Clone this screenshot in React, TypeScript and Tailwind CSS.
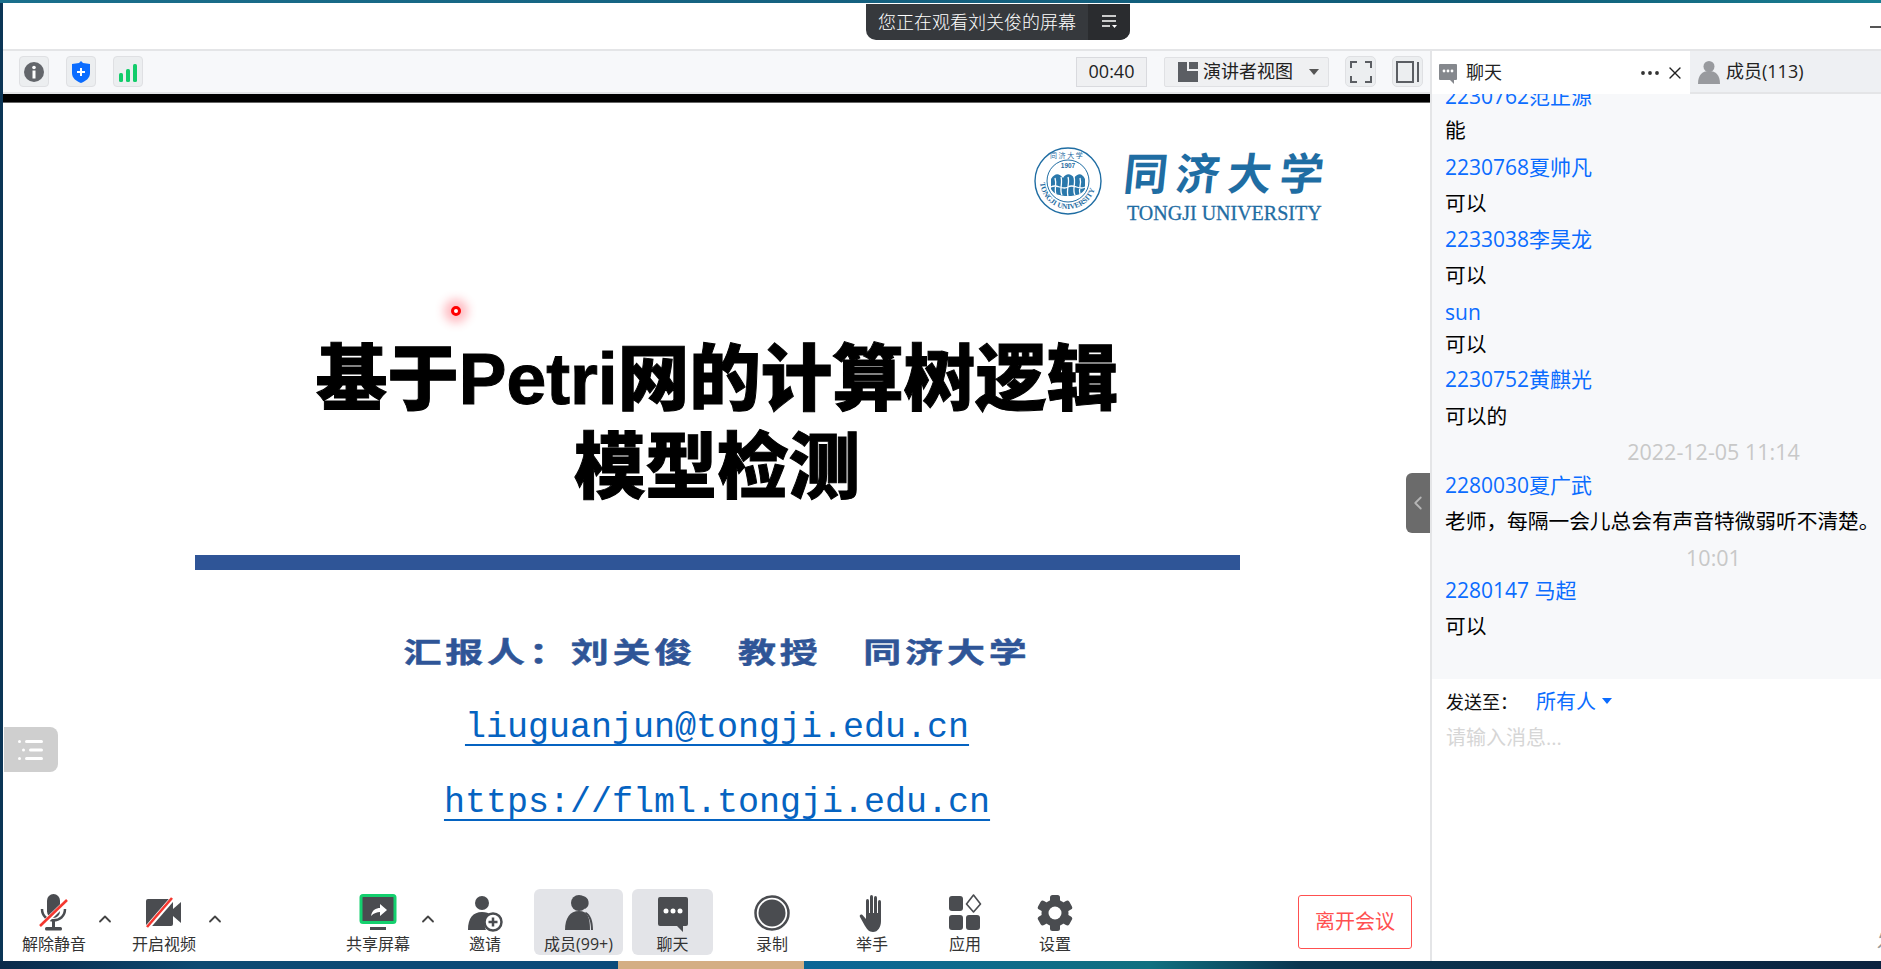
import { Ellipsis, X, ChevronLeft, ChevronUp } from "lucide-react";

const ink = "#4a4c50";

const chat = [
  { text: "2230762范正源", type: "name", cls: "mt-[-16px]" },
  { text: "能", type: "msg", cls: "mt-[-2px]" },
  { text: "2230768夏帅凡", type: "name", cls: "mt-[1px]" },
  { text: "可以", type: "msg", cls: "" },
  { text: "2233038李昊龙", type: "name", cls: "" },
  { text: "可以", type: "msg", cls: "" },
  { text: "sun", type: "name", cls: "mt-[1px]" },
  { text: "可以", type: "msg", cls: "mt-[-4px]" },
  { text: "2230752黄麒光", type: "name", cls: "mt-[-1px]" },
  { text: "可以的", type: "msg", cls: "mt-[1px]" },
  { text: "2022-12-05 11:14", type: "time", cls: "" },
  { text: "2280030夏广武", type: "name", cls: "mt-[-3px]" },
  { text: "老师，每隔一会儿总会有声音特微弱听不清楚。", type: "msg", cls: "" },
  { text: "10:01", type: "time", cls: "mt-[1px]" },
  { text: "2280147 马超", type: "name", cls: "mt-[-4px]" },
  { text: "可以", type: "msg", cls: "" },
];

const MicIcon = () => (
  <svg width="40" height="38" viewBox="0 0 40 38">
    <rect x="13" y="0" width="13" height="24" rx="6.5" fill={ink} />
    <path d="M8 15c0 15 23 15 23 0" fill="none" stroke={ink} strokeWidth="2.5" />
    <rect x="18" y="27" width="3" height="7" fill={ink} />
    <rect x="11" y="33" width="17" height="3.5" rx="1.5" fill={ink} />
    <path d="M6 33 L34 6" stroke="#fff" strokeWidth="5" />
    <path d="M6 32 L33 6" stroke="#f4372f" strokeWidth="2.6" />
  </svg>
);

const VideoIcon = () => (
  <svg width="40" height="38" viewBox="0 0 40 38">
    <rect x="2" y="5" width="27" height="27" rx="2" fill={ink} />
    <path d="M29 15 L37 8 V29 L29 22Z" fill={ink} />
    <path d="M3 34 L29 4" stroke="#fff" strokeWidth="5" />
    <path d="M3 33 L28 4" stroke="#f4372f" strokeWidth="2.6" />
  </svg>
);

const ShareIcon = () => (
  <svg width="38" height="38" viewBox="0 0 38 38">
    <rect x="2" y="1.5" width="34" height="27" rx="2" fill={ink} stroke="#14d06e" strokeWidth="3" />
    <path d="M12 22c1-6 5-8 9-8v-4l7 6-7 6v-4c-3 0-6 1-9 4z" fill="#fff" />
    <rect x="11" y="33" width="16" height="3" fill={ink} />
  </svg>
);

const InviteIcon = () => (
  <svg width="38" height="38" viewBox="0 0 38 38">
    <circle cx="16" cy="9" r="7" fill={ink} />
    <path d="M2 36c0-12 5-18 14-18 4 0 7 1 9 3-6 3-8 9-5 15z" fill={ink} />
    <circle cx="27" cy="28" r="8.5" fill="#fff" stroke={ink} strokeWidth="2.5" />
    <path d="M27 23.5v9M22.5 28h9" stroke={ink} strokeWidth="2.5" />
  </svg>
);

const MembersIcon = () => (
  <svg width="40" height="38" viewBox="0 0 40 38">
    <path d="M24 2a7 7 0 0 1 2 13M27 18c5 3 7 9 7 18h-2c0-8-2-14-6-17z" fill={ink} />
    <circle cx="20" cy="9" r="8" fill={ink} />
    <path d="M6 36c0-12 5-19 14-19s11 7 11 19z" fill={ink} />
  </svg>
);

const ChatIcon = () => (
  <svg width="38" height="38" viewBox="0 0 38 38">
    <path d="M6 3h26a2 2 0 0 1 2 2v25a2 2 0 0 1-2 2h-3v6l-6-6H6a2 2 0 0 1-2-2V5a2 2 0 0 1 2-2z" fill={ink} />
    <circle cx="12" cy="17" r="2.5" fill="#fff" />
    <circle cx="19" cy="17" r="2.5" fill="#fff" />
    <circle cx="26" cy="17" r="2.5" fill="#fff" />
  </svg>
);

const RecordIcon = () => (
  <svg width="38" height="38" viewBox="0 0 38 38">
    <circle cx="19" cy="19" r="16.5" fill="none" stroke={ink} strokeWidth="2.5" />
    <circle cx="19" cy="19" r="13.5" fill={ink} />
  </svg>
);

const HandIcon = () => (
  <svg width="38" height="38" viewBox="0 0 38 38">
    <rect x="13" y="5" width="3" height="20" rx="1.5" fill={ink} />
    <rect x="17" y="1" width="3" height="24" rx="1.5" fill={ink} />
    <rect x="21" y="2" width="3" height="23" rx="1.5" fill={ink} />
    <rect x="25" y="6" width="3" height="20" rx="1.5" fill={ink} />
    <path d="M13 19h15v8c0 6-3 11-8 11-4 0-6-3-8-6l-5-9c-1-2 1-3 2.500-2l3.500 4z" fill={ink} />
  </svg>
);

const AppsIcon = () => (
  <svg width="38" height="38" viewBox="0 0 38 38">
    <rect x="3" y="2" width="14" height="15" rx="3" fill={ink} />
    <rect x="3" y="21" width="14" height="15" rx="3" fill={ink} />
    <rect x="20" y="21" width="14" height="15" rx="3" fill={ink} />
    <path d="M27.500 1 L34.500 10 L27.500 18 L20.500 10Z" fill="none" stroke={ink} strokeWidth="1.6" strokeLinejoin="round" />
  </svg>
);

const GearIcon = () => (
  <svg width="38" height="38" viewBox="0 0 38 38">
    <g fill={ink}>
      <circle cx="19" cy="19" r="13.500" />
      <rect x="14" y="1" width="10" height="36" rx="2.500" />
      <rect x="14" y="1" width="10" height="36" rx="2.500" transform="rotate(60 19 19)" />
      <rect x="14" y="1" width="10" height="36" rx="2.500" transform="rotate(120 19 19)" />
    </g>
    <circle cx="19" cy="19" r="6.500" fill="#fff" />
  </svg>
);

const ToolItem = ({ label, children, className = "" }: { label: string; children: React.ReactNode; className?: string }) => (
  <div className={`flex h-[66px] w-[72px] shrink-0 flex-col items-center pt-[5px] ${className}`}>
    <div className="flex h-[38px] items-center justify-center">{children}</div>
    <span className="mt-[2px] whitespace-nowrap text-[16px] leading-[20px] text-[#333]">{label}</span>
  </div>
);

const Caret = ({ className = "" }: { className?: string }) => (
  <div className={`flex h-[66px] shrink-0 items-start justify-center pt-[20px] ${className}`}>
    <ChevronUp size={20} strokeWidth={2.2} color="#444" />
  </div>
);

const Seal = () => (
  <svg width="70" height="68" viewBox="0 0 70 68" className="shrink-0">
    <defs>
      <path id="sealBottom" d="M7 34a28 28 0 0 0 56 0" />
    </defs>
    <circle cx="35" cy="34" r="33" fill="none" stroke="#1f6da3" strokeWidth="1.400" />
    <circle cx="35" cy="34" r="21" fill="none" stroke="#1f6da3" strokeWidth="1" />
    <text fontSize="7.500" fontWeight="700" fill="#1f6da3" fontFamily="Liberation Serif, serif">
      <textPath href="#sealBottom" startOffset="2%">TONGJI UNIVERSITY</textPath>
    </text>
    <text x="35" y="21" textAnchor="middle" fontSize="6.500" fontWeight="700" fill="#1f6da3" fontFamily="Liberation Sans, sans-serif">1907</text>
    <text x="17" y="11" fontSize="7" fill="#1f6da3" fontFamily="Noto Sans CJK SC, sans-serif">同 济 大 学</text>
    <path d="M18 32c4-6 8-6 12-1 3-5 8-5 11 0 4-5 8-5 11 1v10c-3 5-8 7-17 7s-14-2-17-7z" fill="#2a78ab" />
    <path d="M22 31c2 6-1 12 1 16M28 30c2 6-2 13 1 18M35 30c2 6-2 13 0 19M41 30c2 6-2 13 1 18M47 31c2 6-2 11 0 16M18 40c6-4 11 4 17 0s11 4 17 0" fill="none" stroke="#fff" strokeWidth="1.300" />
  </svg>
);

const App = () => {
  return (
    <div className="flex h-[969px] w-[1881px] flex-col overflow-hidden bg-[#0b3556] font-['Open_Sans','Noto_Sans_CJK_SC',sans-serif]">
      <div className="h-[3px] shrink-0 bg-[linear-gradient(90deg,#1a6f8c,#14607f_900px,#0f5c78_1500px,#1a7f92)]" />

      <div className="ml-[3px] flex h-[958px] shrink-0 flex-col bg-white">
        {/* title bar */}
        <div className="flex h-[46px] shrink-0 items-start pt-[1px]">
          <div className="ml-[863px] flex h-[36px] w-[264px] overflow-hidden rounded-b-[10px] bg-[#36393d] text-white">
            <div className="flex flex-1 items-center whitespace-nowrap pl-[12px] text-[18px] font-light">您正在观看刘关俊的屏幕</div>
            <div className="flex w-[42px] items-center justify-center bg-[#2a2c2f]">
              <svg width="18" height="16" viewBox="0 0 18 16">
                <path d="M2 2h14M2 7h14M2 12h8" stroke="#fff" strokeWidth="1.600" />
                <path d="M12 11h5l-2.500 3z" fill="#fff" />
              </svg>
            </div>
          </div>
          <div className="ml-auto mt-[22px] h-[2px] w-[11px] bg-[#555]" />
        </div>

        <div className="flex min-h-0 flex-1">
          {/* meeting */}
          <div className="relative flex w-[1427px] shrink-0 flex-col">
            <div className="flex h-[45px] shrink-0 items-center border-y-2 border-[#e4e5e7] bg-[#f7f8fa] pl-[16px] pr-[7px]">
              <div className="flex h-[31px] w-[30px] items-center justify-center rounded-[4px] border border-[#dfe0e3] bg-[#eceef0]">
                <svg width="20" height="20" viewBox="0 0 20 20">
                  <circle cx="10" cy="10" r="10" fill="#63666b" />
                  <circle cx="10" cy="5.500" r="1.800" fill="#fff" />
                  <rect x="8.500" y="8.500" width="3" height="8" fill="#fff" />
                </svg>
              </div>
              <div className="ml-[17px] flex h-[31px] w-[30px] items-center justify-center rounded-[4px] border border-[#dfe0e3] bg-[#eceef0]">
                <svg width="20" height="22" viewBox="0 0 20 22">
                  <path d="M10 0l2 2 7 1v9c0 5-4 8-9 10-5-2-9-5-9-10V3l7-1z" fill="#0b6cff" />
                  <path d="M10 7v8M6 11h8" stroke="#fff" strokeWidth="2" />
                </svg>
              </div>
              <div className="ml-[17px] flex h-[31px] w-[30px] items-center justify-center rounded-[4px] border border-[#dfe0e3] bg-[#eceef0]">
                <svg width="20" height="20" viewBox="0 0 20 20">
                  <rect x="1" y="11" width="4" height="9" rx="1.500" fill="#12cc6a" />
                  <rect x="8" y="7" width="4" height="13" rx="1.500" fill="#12cc6a" />
                  <rect x="15" y="2" width="4" height="18" rx="1.500" fill="#12cc6a" />
                </svg>
              </div>

              <div className="ml-auto flex h-[30px] w-[71px] items-center justify-center border border-[#d9dade] bg-[#eff0f2] text-[18px] text-[#222]">00:40</div>
              <div className="ml-[17px] flex h-[30px] w-[165px] items-center rounded-[2px] border border-[#e0e1e4] bg-[#eff0f2] pl-[13px] text-[18px] text-[#222]">
                <svg width="20" height="20" viewBox="0 0 20 20" className="shrink-0">
                  <path d="M0 0h9v9H20v11H0z" fill="#5b5e63" />
                  <rect x="11" y="0" width="9" height="7" fill="#5b5e63" />
                </svg>
                <span className="ml-[5px] whitespace-nowrap">演讲者视图</span>
                <svg width="12" height="8" viewBox="0 0 12 8" className="ml-[15px]">
                  <path d="M1 1h10L6 7z" fill="#555" />
                </svg>
              </div>
              <div className="ml-[16px] flex h-[31px] w-[31px] items-center justify-center rounded-[5px] border border-[#dfe0e3] bg-[#eceef0]">
                <svg width="22" height="22" viewBox="0 0 22 22" fill="none" stroke="#5b5e63" strokeWidth="2">
                  <path d="M1 7V1h6M15 1h6v6M21 15v6h-6M7 21H1v-6" />
                </svg>
              </div>
              <div className="ml-[16px] flex h-[31px] w-[31px] items-center justify-center rounded-[5px] border border-[#dfe0e3] bg-[#eceef0]">
                <svg width="24" height="22" viewBox="0 0 24 22" fill="none" stroke="#5b5e63" strokeWidth="2">
                  <rect x="1" y="1" width="16" height="20" />
                  <path d="M22 1v20" />
                </svg>
              </div>
            </div>

            <div className="h-[9px] shrink-0 border-b border-[#666] bg-black" />

            {/* slide */}
            <div className="flex min-h-0 flex-1 flex-col items-center overflow-hidden bg-white pl-[1px]">
              <div className="mt-[44px] flex h-[75px] w-full items-start pl-[1029px]">
                <Seal />
                <div className="ml-[21px] flex flex-col text-[#1f6da3]">
                  <span className="h-[53px] whitespace-nowrap text-[44px] font-bold leading-[53px] tracking-[8px] -skew-x-6">同济大学</span>
                  <span className="ml-[3px] mt-[3px] whitespace-nowrap font-['Liberation_Serif',serif] text-[20px] leading-[20px] [-webkit-text-stroke:0.3px_#1f6da3]">TONGJI UNIVERSITY</span>
                </div>
              </div>
              <h1 className="mt-[113px] text-center font-['Liberation_Sans','Noto_Sans_CJK_SC',sans-serif] text-[71.500px] font-black leading-[88px] text-black [-webkit-text-stroke:1px_black]">
                基于Petri网的计算树逻辑
                <br />
                模型检测
              </h1>
              <div className="mt-[44px] h-[15px] w-[1045px] shrink-0 bg-[#2f5597]" />
              <div className="mt-[57px] origin-center scale-y-[0.76] whitespace-nowrap text-[38px] font-bold leading-[50px] tracking-[3.800px] text-[#2f5597] [-webkit-text-stroke:0.6px_#2f5597]">
                汇报人：刘关俊　教授　同济大学
              </div>
              <div className="mt-[26px] font-['Liberation_Mono',monospace] text-[35px] leading-[50px] text-[#0563c1] underline decoration-2 underline-offset-[7px]">
                liuguanjun@tongji.edu.cn
              </div>
              <div className="mt-[25px] font-['Liberation_Mono',monospace] text-[35px] leading-[50px] text-[#0563c1] underline decoration-2 underline-offset-[7px]">
                https://flml.tongji.edu.cn
              </div>
            </div>

            {/* bottom controls */}
            <div className="flex h-[76px] shrink-0 items-start bg-white pl-[15px] pr-[18px] pt-[4px]">
              <ToolItem label="解除静音"><MicIcon /></ToolItem>
              <Caret className="w-[30px]" />
              <ToolItem label="开启视频" className="ml-[8px]"><VideoIcon /></ToolItem>
              <Caret className="w-[30px]" />
              <ToolItem label="共享屏幕" className="ml-[112px]"><ShareIcon /></ToolItem>
              <Caret className="w-[28px]" />
              <ToolItem label="邀请" className="ml-[7px]"><InviteIcon /></ToolItem>
              <ToolItem label="成员(99+)" className="ml-[13px] !w-[89px] rounded-[6px] bg-[#e3e4e8]"><MembersIcon /></ToolItem>
              <ToolItem label="聊天" className="ml-[9px] !w-[81px] rounded-[6px] bg-[#e3e4e8]"><ChatIcon /></ToolItem>
              <ToolItem label="录制" className="ml-[23px]"><RecordIcon /></ToolItem>
              <ToolItem label="举手" className="ml-[28px]"><HandIcon /></ToolItem>
              <ToolItem label="应用" className="ml-[21px]"><AppsIcon /></ToolItem>
              <ToolItem label="设置" className="ml-[18px]"><GearIcon /></ToolItem>
              <button className="ml-auto mt-[6px] flex h-[54px] w-[114px] items-center justify-center rounded-[3px] border border-[#ff5050] bg-white text-[20px] text-[#ff5050]">
                离开会议
              </button>
            </div>

            {/* laser pointer */}
            <div className="absolute left-[448px] top-[257px] h-[10px] w-[10px] rounded-full border-[3px] border-[#f00] bg-white shadow-[0_0_10px_7px_rgba(255,40,60,0.3)]" />
            {/* side list button */}
            <div className="absolute left-[1px] top-[678px] flex h-[45px] w-[54px] flex-col items-center justify-center gap-[6px] rounded-r-[8px] bg-[#cfcfcf]">
              <svg width="26" height="24" viewBox="0 0 26 24" fill="#fff">
                <rect x="0" y="2" width="3" height="3" rx="1.500" />
                <rect x="7" y="2" width="18" height="3" rx="1.500" />
                <rect x="4" y="10.500" width="3" height="3" rx="1.500" />
                <rect x="11" y="10.500" width="14" height="3" rx="1.500" />
                <rect x="0" y="19" width="3" height="3" rx="1.500" />
                <rect x="7" y="19" width="18" height="3" rx="1.500" />
              </svg>
            </div>
            {/* collapse handle */}
            <div className="absolute right-0 top-[424px] flex h-[60px] w-[24px] items-center justify-center rounded-l-[6px] bg-[#6b6b6b]">
              <ChevronLeft size={22} color="#b5b5b5" strokeWidth={2} />
            </div>
          </div>

          {/* sidebar */}
          <div className="relative flex min-w-0 flex-1 flex-col overflow-hidden border-l-2 border-[#e4e5e7]">
            <div className="flex h-[45px] shrink-0">
              <div className="flex w-[258px] items-center border-t-2 border-[#e4e5e7] bg-white pl-[6px] pr-[5px]">
                <svg width="20" height="22" viewBox="0 0 20 22" className="shrink-0">
                  <path d="M2 2h16a1 1 0 0 1 1 1v14a1 1 0 0 1-1 1h-2v4l-4-4H2a1 1 0 0 1-1-1V3a1 1 0 0 1 1-1z" fill="#85888d" />
                  <circle cx="6" cy="9" r="1.400" fill="#fff" />
                  <circle cx="10" cy="9" r="1.400" fill="#fff" />
                  <circle cx="14" cy="9" r="1.400" fill="#fff" />
                </svg>
                <span className="ml-[8px] text-[18px] text-[#222]">聊天</span>
                <Ellipsis size={24} color="#333" strokeWidth={1.800} className="ml-auto" />
                <X size={20} color="#222" strokeWidth={1.600} className="ml-[3px]" />
              </div>
              <div className="flex flex-1 items-center border-y-2 border-[#e4e5e7] bg-[#eef0f3] pl-[7px]">
                <svg width="24" height="24" viewBox="0 0 24 24" className="shrink-0">
                  <circle cx="12" cy="6.500" r="5.500" fill="#989a9e" />
                  <path d="M1 24c0-9 4-13 11-13s11 4 11 13z" fill="#989a9e" />
                </svg>
                <span className="ml-[5px] text-[18px] text-[#222]">成员(113)</span>
              </div>
            </div>

            <div className="h-[585px] shrink-0 overflow-hidden bg-[#f7f8fa] pl-[13px]">
              {chat.map((row, i) => (
                <div
                  key={i}
                  className={`h-[36px] whitespace-nowrap leading-[36px] ${row.cls} ${
                    row.type === "time" ? "pl-[101px] text-center text-[21.500px] text-[#c8c8c8]" : row.type === "name" ? "text-[21px] text-[#0b6cff]" : "text-[20.700px] text-black"
                  }`}
                >
                  {row.text}
                </div>
              ))}
            </div>

            <div className="flex-1 bg-white pl-[14px]">
              <div className="mt-[8px] flex h-[30px] items-center">
                <span className="text-[18px] text-[#111]">发送至：</span>
                <span className="ml-[18px] text-[20px] text-[#0b6cff]">所有人</span>
                <svg width="10" height="6" viewBox="0 0 10 6" className="ml-[6px] mb-[3px]">
                  <path d="M0 0h10L5 6z" fill="#0b6cff" />
                </svg>
              </div>
              <div className="mt-[6px] text-[20px] leading-[30px] text-[#d6d6d6]">请输入消息...</div>
            </div>
            <span className="absolute bottom-[6px] right-[-14px] text-[18px] text-[#999]">发</span>
          </div>
        </div>
      </div>

      <div className="h-[8px] shrink-0 bg-[linear-gradient(90deg,#0a2a4a_0,#0d4a72_200px,#0b4a7a_618px,#d4ae84_618px,#d4ae84_804px,#0b6596_804px,#107080_1150px,#0a3550_1300px,#0b2340_1881px)]" />
    </div>
  );
};

export default App;
